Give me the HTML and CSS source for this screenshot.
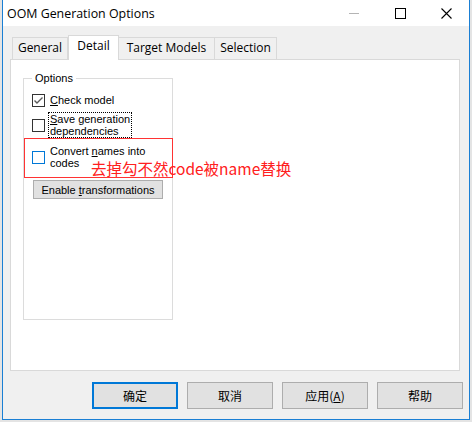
FILE: index.html
```html
<!DOCTYPE html>
<html lang="zh-CN">

<head>
    <meta charset="UTF-8" />
    <title>OOM Generation Options</title>
    <link rel="stylesheet" href="styles.css">
</head>

<body>
    <div class="window">
        <!-- Title bar -->
        <div class="titlebar">
            <span class="title">OOM Generation Options</span>
            <div class="controls">
                <span class="ctl">
                    <svg width="10" height="10" viewBox="0 0 10 10"><line x1="0" y1="5.5" x2="10" y2="5.5" stroke="#b4b4b4" stroke-width="1" /></svg>
                </span>
                <span class="ctl">
                    <svg width="11" height="11" viewBox="0 0 11 11"><rect x="0.5" y="0.5" width="10" height="10" fill="none" stroke="#000" stroke-width="1" /></svg>
                </span>
                <span class="ctl">
                    <svg width="11" height="11" viewBox="0 0 11 11"><path d="M0.5 0.5 L10.5 10.5 M10.5 0.5 L0.5 10.5" stroke="#000" stroke-width="1.1" /></svg>
                </span>
            </div>
        </div>

        <div class="content">
            <!-- Tabs -->
            <div class="tabs">
                <div class="tab tab-general">General</div>
                <div class="tab tab-detail active">Detail</div>
                <div class="tab tab-target">Target Models</div>
                <div class="tab tab-selection">Selection</div>
            </div>

            <div class="panel">
                <fieldset class="group">
                    <legend>Options</legend>
                    <div class="check-row row-1">
                        <span class="box">
                            <svg width="11" height="11" viewBox="0 0 11 11"><path d="M1.5 5.5 L4 8 L9.5 2.5" fill="none" stroke="#5a5a5a" stroke-width="1.4" /></svg>
                        </span>
                        <span class="label"><u>C</u>heck model</span>
                    </div>
                    <div class="check-row row-2">
                        <span class="box"></span>
                        <span class="label focused"><u>S</u>ave generation<br>dependencies</span>
                    </div>
                    <div class="check-row row-3">
                        <span class="box hover"></span>
                        <span class="label">Convert <u>n</u>ames into<br>codes</span>
                    </div>
                    <button class="btn-small">Enable <u>t</u>ransformations</button>
                </fieldset>

                <!-- annotation drawn over the dialog -->
                <div class="note-box"></div>
                <div class="note-text">去掉勾不然code被name替换</div>
            </div>

            <div class="footer">
                <button class="btn default">确定</button>
                <button class="btn">取消</button>
                <button class="btn">应用(<u>A</u>)</button>
                <button class="btn">帮助</button>
            </div>
        </div>
    </div>
</body>

</html>
```

FILE: styles.css
```css
html,
body {
    margin: 0;
    padding: 0;
    height: 100%;
    overflow: hidden;
    background: #e4e4e4;
}

* {
    box-sizing: border-box;
}

/* Dialog window */
.window {
    margin-left: 2px;
    width: 468px;
    height: 420px;
    border: 1px solid #1a7fd4;
    border-top: none;
    display: flex;
    flex-direction: column;
    background: #f0f0f0;
}

.titlebar {
    height: 26px;
    background: #fff;
    display: flex;
    align-items: center;
    justify-content: space-between;
    padding-left: 4px;
    font-family: 'Open Sans', sans-serif;
    font-size: 12.4px;
    color: #000;
}

.controls {
    display: flex;
    height: 100%;
}

.ctl {
    width: 46px;
    display: flex;
    align-items: center;
    justify-content: center;
}

.ctl svg {
    display: block;
}

.content {
    flex: 1;
    padding: 9px 9px 0 7px;
}

/* Tabs */
.tabs {
    display: flex;
    align-items: flex-end;
    height: 24px;
    padding-left: 2px;
    font-family: 'Open Sans', sans-serif;
    font-size: 12px;
}

.tab {
    flex: none;
    height: 22px;
    line-height: 20px;
    text-align: center;
    border: 1px solid #d9d9d9;
    border-bottom: none;
    background: #f0f0f0;
    color: #000;
}

.tab-general {
    width: 56px;
}

.tab-detail {
    width: 51px;
}

.tab-target {
    width: 97px;
    margin-left: -1px;
}

.tab-selection {
    width: 63px;
    margin-left: -1px;
}

.tab.active {
    position: relative;
    z-index: 1;
    height: 25px;
    line-height: 20px;
    margin-bottom: -1px;
    background: #fff;
}

.panel {
    position: relative;
    height: 312px;
    background: #fff;
    border: 1px solid #d9d9d9;
    padding: 11px 0 0 12px;
}

/* Group box */
.group {
    margin: 0;
    padding: 0 0 0 8px;
    width: 150px;
    height: 249px;
    border: 1px solid #dcdcdc;
    font-family: 'Liberation Sans', Arial, sans-serif;
    font-size: 11px;
    color: #000;
}

.group legend {
    padding: 0 3px;
    line-height: 14px;
    height: 14px;
}

.check-row {
    display: flex;
    align-items: center;
    gap: 3px;
}

.row-1 {
    margin-top: 8px;
}

.row-2 {
    margin-top: 5px;
}

.row-3 {
    margin-top: 6px;
}

.box {
    flex: none;
    width: 13px;
    height: 13px;
    border: 1px solid #333;
    background: #fff;
}

.box svg {
    display: block;
}

.box.hover {
    border-color: #0078d7;
}

.label {
    line-height: 12px;
    padding: 0 1px;
    border: 1px dotted transparent;
}

.label.focused {
    border-color: #000;
}

.btn-small {
    display: block;
    margin: 10px 0 0 1px;
    width: 130px;
    height: 19px;
    padding: 0;
    background: #e1e1e1;
    border: 1px solid #adadad;
    font-family: 'Liberation Sans', Arial, sans-serif;
    font-size: 11px;
    color: #000;
}

/* Red annotation */
.note-box {
    position: absolute;
    left: 13px;
    top: 78px;
    width: 149px;
    height: 40px;
    border: 1px solid #ff3333;
}

.note-text {
    position: absolute;
    left: 80px;
    top: 100px;
    font-family: 'Noto Sans CJK SC', sans-serif;
    font-size: 15.5px;
    line-height: 17px;
    color: #ff2020;
    white-space: nowrap;
}

/* Bottom buttons */
.footer {
    display: flex;
    justify-content: flex-end;
    gap: 9px;
    margin: 11px -3px 0 0;
}

.btn {
    width: 86px;
    height: 27px;
    padding: 0;
    background: #e1e1e1;
    border: 1px solid #adadad;
    font-family: 'Noto Sans CJK SC', sans-serif;
    font-size: 12px;
    color: #000;
}

.btn.default {
    border: 2px solid #0078d7;
}
```
